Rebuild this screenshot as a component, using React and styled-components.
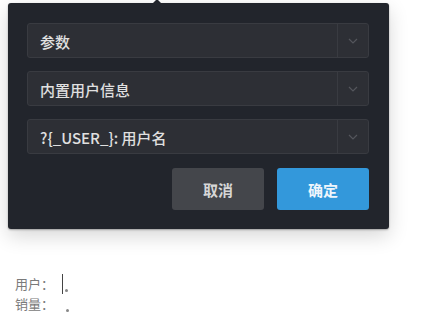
import React from "react";
import styled, { createGlobalStyle } from "styled-components";

const Global = createGlobalStyle`
  html, body { margin: 0; padding: 0; background: #fff; }
  body { font-family: "Noto Sans CJK SC", "Noto Sans", sans-serif; }
`;

const Page = styled.div`
  padding: 3px 0 0 8px;
`;

const Panel = styled.div`
  position: relative;
  width: 381px;
  box-sizing: border-box;
  padding: 20px 20px 19px 19px;
  background: #22252c;
  border-radius: 3px;
  box-shadow: 0 7px 20px rgba(0, 0, 0, 0.16), 0 1px 2px rgba(0, 0, 0, 0.3);
  display: flex;
  flex-direction: column;
  gap: 13px;
`;

const Arrow = styled.div`
  position: absolute;
  top: -4px;
  left: 144px;
  width: 0;
  height: 0;
  border-left: 5px solid transparent;
  border-right: 5px solid transparent;
  border-bottom: 5px solid #22252c;
`;

const Select = styled.div`
  height: 35px;
  box-sizing: border-box;
  display: flex;
  align-items: stretch;
  background: #2d2f35;
  border: 1px solid #393b41;
  border-radius: 3px;
`;

const Value = styled.div`
  flex: 1;
  display: flex;
  align-items: center;
  padding: 2px 0 0 12px;
  color: #e0e0e0;
  font-size: 15px;
  font-weight: 500;
`;

const Caret = styled.div`
  width: 30px;
  border-left: 1px solid #393b41;
  display: flex;
  align-items: center;
  justify-content: center;
`;

const Actions = styled.div`
  display: flex;
  justify-content: flex-end;
  gap: 13px;
  margin-top: 1px;
`;

const Button = styled.button`
  width: 92px;
  height: 42px;
  border: none;
  border-radius: 3px;
  font-family: inherit;
  font-size: 15px;
  font-weight: 700;
  color: ${(p) => (p.$primary ? "#eef5fc" : "#d6d6d6")};
  background: ${(p) => (p.$primary ? "#3398db" : "#44464b")};
`;

const Info = styled.div`
  margin: 45px 0 0 7px;
  font-size: 13px;
  line-height: 20px;
  color: #7a7a7a;
`;

const Line = styled.div`
  display: flex;
  align-items: center;
  height: 20px;
`;

const Cursor = styled.span`
  display: inline-block;
  width: 1px;
  height: 20px;
  margin-left: 8px;
  background: #444;
`;

const Dot = styled.span`
  display: inline-block;
  width: 3px;
  height: 3px;
  border-radius: 50%;
  background: #888;
  margin-left: ${(p) => p.$offset}px;
  margin-top: ${(p) => p.$drop}px;
`;

const Chevron = () => (
  <svg width="10" height="6" viewBox="0 0 10 6">
    <path d="M1 1 L5 5 L9 1" fill="none" stroke="#54565c" strokeWidth="1.2" />
  </svg>
);

const Field = ({ children }) => (
  <Select>
    <Value>{children}</Value>
    <Caret>
      <Chevron />
    </Caret>
  </Select>
);

export default function App() {
  return (
    <>
      <Global />
      <Page>
        <Panel>
          <Arrow />
          <Field>参数</Field>
          <Field>内置用户信息</Field>
          <Field>?{"{"}_USER_{"}"}: 用户名</Field>
          <Actions>
            <Button>取消</Button>
            <Button $primary>确定</Button>
          </Actions>
        </Panel>
        <Info>
          <Line>
            用户：
            <Cursor />
            <Dot $offset={2} $drop={12} />
          </Line>
          <Line>
            销量：
            <Dot $offset={12} $drop={12} />
          </Line>
        </Info>
      </Page>
    </>
  );
}
